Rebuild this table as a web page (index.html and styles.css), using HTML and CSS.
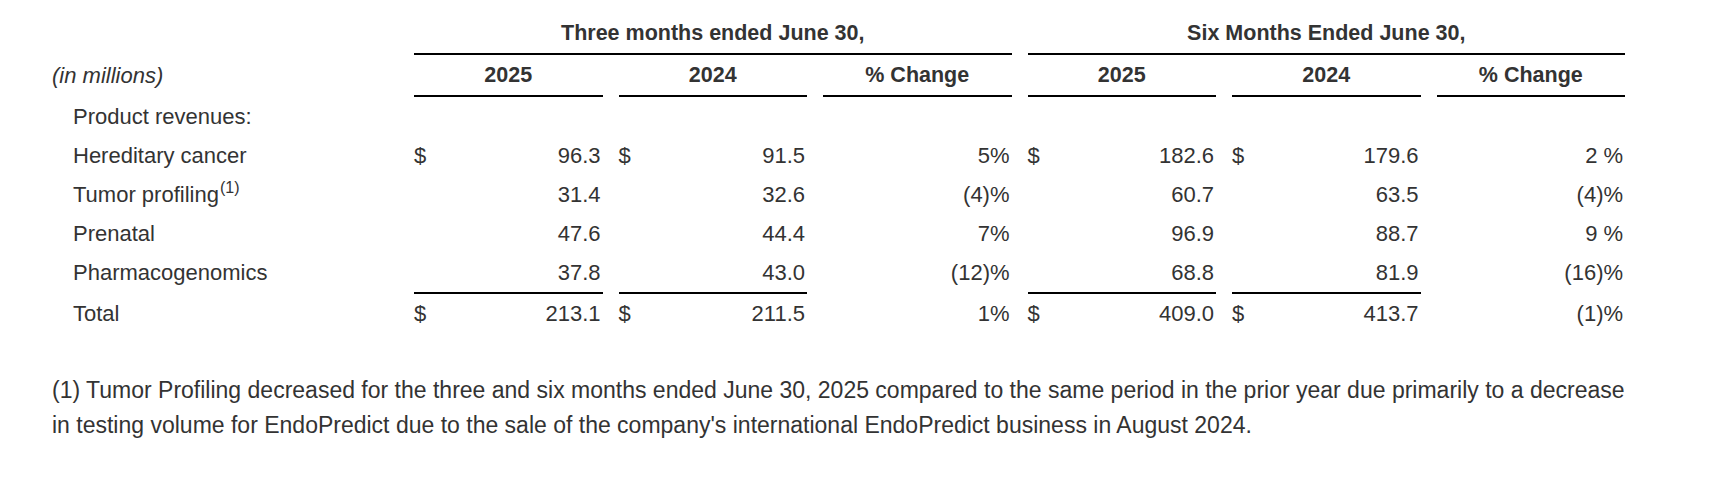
FILE: index.html
```html
<!DOCTYPE html>
<html lang="en">
<head>
<meta charset="utf-8">
<title>Product revenues</title>
<link rel="stylesheet" href="styles.css">
</head>
<body>
<main class="page">
  <table class="fin">
    <colgroup>
      <col class="c-label">
      <col class="c-num"><col class="c-num"><col class="c-num">
      <col class="c-num"><col class="c-num"><col class="c-num">
    </colgroup>
    <thead>
      <tr class="grp">
        <th class="blank"></th>
        <th colspan="3" class="grp-h">Three months ended June 30,</th>
        <th colspan="3" class="grp-h">Six Months Ended June 30,</th>
      </tr>
      <tr class="cols">
        <th class="unit">(in millions)</th>
        <th class="col-h">2025</th>
        <th class="col-h">2024</th>
        <th class="col-h">% Change</th>
        <th class="col-h">2025</th>
        <th class="col-h">2024</th>
        <th class="col-h">% Change</th>
      </tr>
    </thead>
    <tbody>
      <tr>
        <td class="lbl">Product revenues:</td>
        <td></td><td></td><td></td><td></td><td></td><td></td>
      </tr>
      <tr>
        <td class="lbl">Hereditary cancer</td>
        <td class="num"><span class="cur">$</span>96.3</td>
        <td class="num"><span class="cur">$</span>91.5</td>
        <td class="num">5%</td>
        <td class="num"><span class="cur">$</span>182.6</td>
        <td class="num"><span class="cur">$</span>179.6</td>
        <td class="num">2 %</td>
      </tr>
      <tr>
        <td class="lbl">Tumor profiling<sup class="fn">(1)</sup></td>
        <td class="num">31.4</td>
        <td class="num">32.6</td>
        <td class="num">(4)%</td>
        <td class="num">60.7</td>
        <td class="num">63.5</td>
        <td class="num">(4)%</td>
      </tr>
      <tr>
        <td class="lbl">Prenatal</td>
        <td class="num">47.6</td>
        <td class="num">44.4</td>
        <td class="num">7%</td>
        <td class="num">96.9</td>
        <td class="num">88.7</td>
        <td class="num">9 %</td>
      </tr>
      <tr>
        <td class="lbl">Pharmacogenomics</td>
        <td class="num">37.8</td>
        <td class="num">43.0</td>
        <td class="num">(12)%</td>
        <td class="num">68.8</td>
        <td class="num">81.9</td>
        <td class="num">(16)%</td>
      </tr>
      <tr class="total">
        <td class="lbl">Total</td>
        <td class="num ruled"><span class="cur">$</span>213.1</td>
        <td class="num ruled"><span class="cur">$</span>211.5</td>
        <td class="num">1%</td>
        <td class="num ruled"><span class="cur">$</span>409.0</td>
        <td class="num ruled"><span class="cur">$</span>413.7</td>
        <td class="num">(1)%</td>
      </tr>
    </tbody>
  </table>
  <p class="note">(1) Tumor Profiling decreased for the three and six months ended June 30, 2025 compared to the same period in the prior year due primarily to a decrease in testing volume for EndoPredict due to the sale of the company's international EndoPredict business in August 2024.</p>
</main>
</body>
</html>
```

FILE: styles.css
```css
html, body {
  margin: 0;
  padding: 0;
  background: #ffffff;
}

body {
  font-family: "Liberation Sans", Arial, sans-serif;
  color: #333333;
}

.page {
  padding: 14px 0 0 52px;
}

.fin {
  table-layout: fixed;
  border-collapse: separate;
  border-spacing: 16px 0;
  width: 1605px;
  margin-left: -16px;
  font-size: 22px;
}

.c-label { width: 346px; }
.c-num { width: 188.5px; }

.fin th,
.fin td {
  padding: 0;
  vertical-align: middle;
  white-space: nowrap;
}

.grp th {
  height: 39px;
  line-height: 39px;
}

.grp-h {
  font-size: 21.5px;
  font-weight: bold;
  text-align: center;
  border-bottom: 2px solid #000;
}

.cols th {
  height: 40px;
  line-height: 40px;
}

.unit {
  font-weight: normal;
  font-style: italic;
  text-align: left;
}

.col-h {
  font-size: 21.5px;
  font-weight: bold;
  text-align: center;
  border-bottom: 2px solid #000;
}

.fin tbody td {
  height: 39px;
  line-height: 39px;
}

.lbl {
  padding-left: 21px !important;
  text-align: left;
}

.num {
  text-align: right;
  padding-right: 2px !important;
}

.cur {
  float: left;
}

.fn {
  font-size: 16px;
  line-height: 0;
  vertical-align: 9px;
  margin-left: 1px;
}

.total td {
  border-top: 2px solid transparent;
}

.total td.ruled {
  border-top-color: #000;
}

.note {
  margin: 40px 0 0 0;
  width: 1580px;
  font-size: 23px;
  line-height: 35px;
}
```
